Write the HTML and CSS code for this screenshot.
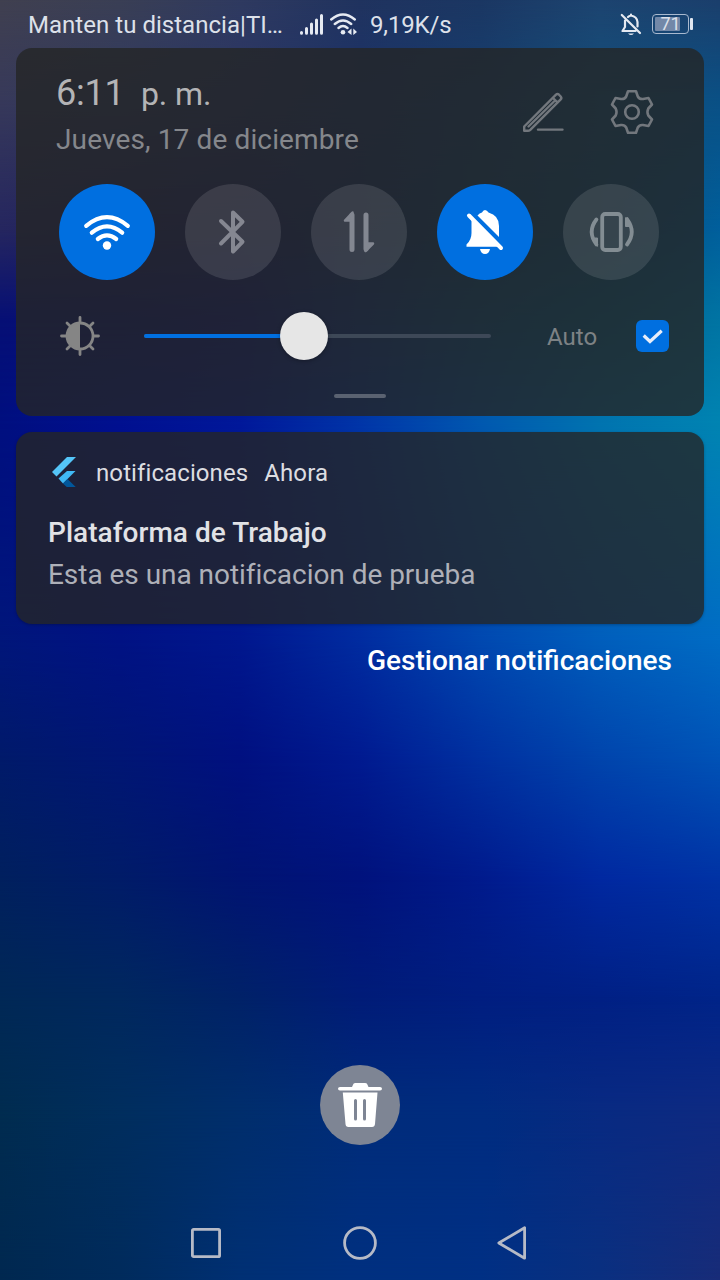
FILE: index.html
```html
<!DOCTYPE html>
<html lang="es">
<head>
<meta charset="utf-8">
<title>Panel de notificaciones</title>
<link rel="stylesheet" href="styles.css">
</head>
<body>
<div class="screen">
  <div class="wallpaper">
    <i class="band b0"></i><i class="band b1"></i><i class="band b2"></i><i class="band b3"></i><i class="band b4"></i><i class="band b5"></i><i class="band b6"></i><i class="band b7"></i><i class="band b8"></i><i class="band b9"></i><i class="band b10"></i>
  </div>

  <header class="status">
    <span class="carrier">Manten tu distancia|TI…</span>
    <svg class="signal" width="24" height="24" viewBox="0 0 24 24" stroke="#e6eaf2" stroke-width="3" stroke-linecap="round"><path d="M1.500 20.600V21.200M6.500 16.500V21.200M11.500 12V21.200M16.500 8V21.200M21.500 3.500V21.200"/></svg>
    <svg class="wifi-small" width="28" height="24" viewBox="0 0 28 24" fill="none" stroke="#e6eaf2" stroke-width="2.400" stroke-linecap="round"><path d="M1.200 7.500Q13-2.500 24.800 7.500M4.800 12Q13 4.800 21.200 12M8.500 16Q13 12 17.500 16"/><circle cx="13" cy="20.300" r="2.300" fill="#e6eaf2" stroke="none"/><path d="M21.500 16.500V23L17.500 20ZM23.300 23V16.500L27 20Z" fill="#e6eaf2" stroke="none"/></svg>
    <span class="speed">9,19K/s</span>
    <svg class="mute" width="22" height="24" viewBox="0 0 22 24" fill="none" stroke="#e6eaf2" stroke-width="2.200" stroke-linecap="round" stroke-linejoin="round"><path d="M1.800 3L20 21M5 8.500V15L2.500 19H15.500M8 5Q9 4 11 3.500Q17 4.500 17.500 10V14.500M11 2.500V3.500"/><path d="M8 21.500H14Q11 24.500 8 21.500Z" fill="#e6eaf2" stroke="none"/></svg>
    <span class="battery"><span class="battery-level"></span><span class="battery-num">71</span></span>
    <span class="battery-tip"></span>
  </header>

  <section class="panel quick">
    <div class="quick-head">
      <div>
        <div class="clock"><span class="time">6:11</span><span class="ampm">p. m.</span></div>
        <div class="date">Jueves, 17 de diciembre</div>
      </div>
      <svg class="edit" width="44" height="44" viewBox="0 0 44 44" fill="none" stroke="#72777d" stroke-width="2.400" stroke-linecap="round" stroke-linejoin="round"><path d="M2.200 40.800V36.500L34 4.700Q35.500 3.300 37 4.700L38.700 6.500Q40 8 38.700 9.300L8.500 39.700Q7 40.800 6 40.800ZM31 8L35.200 12.200M6.500 36.500L32 11.500M16 39.600H40.500"/></svg>
      <svg class="gear" width="44" height="46" viewBox="0 0 44 46" fill="none" stroke="#72777d" stroke-width="2.600" stroke-linejoin="round"><path d="M18 2.300H26L27.800 7.500Q29.500 10.400 33 10L38.500 9L42 15.500L38.300 19.500Q36.600 23 38.300 26.500L42 30.500L38.500 37L33 36Q29.500 35.600 27.800 38.500L26 43.700H18L16.200 38.500Q14.500 35.600 11 36L5.500 37L2 30.500L5.700 26.500Q7.400 23 5.700 19.500L2 15.500L5.500 9L11 10Q14.500 10.400 16.200 7.500Z"/><circle cx="22" cy="23" r="6.800"/></svg>
    </div>

    <div class="toggles">
      <span class="toggle on"><svg width="96" height="96" viewBox="0 0 96 96" fill="none" stroke="#fff" stroke-width="4.200" stroke-linecap="round"><path d="M27.200 41.800Q48 24.500 68.800 41.800M32.800 48.700Q48 36 63.200 48.700M38.800 55Q48 47.800 57.200 55"/><circle cx="48" cy="61.500" r="4.200" fill="#fff" stroke="none"/></svg></span>
      <span class="toggle"><svg width="96" height="96" viewBox="0 0 96 96" fill="none" stroke="#858791" stroke-width="4" stroke-linecap="round" stroke-linejoin="round"><path d="M36 37L57.500 57.800L48 67.500V28.500L57.500 37.800L36 59.500"/></svg></span>
      <span class="toggle"><svg width="96" height="96" viewBox="0 0 96 96" fill="none" stroke="#838791" stroke-width="5" stroke-linecap="round"><path d="M41 31V65.500M55 31V65"/><path d="M41.500 28.500L34 36.500H41ZM55 59.500H62L54.500 67Z" fill="#838791" stroke-width="2.500" stroke-linejoin="round"/></svg></span>
      <span class="toggle on"><svg width="96" height="96" viewBox="0 0 96 96" fill="#fff"><path d="M40.500 31.500Q42.500 29.300 45 28.600Q46 26 48 26T51.500 28.600Q62 31.500 62 42V53ZM34.500 34L63 62.700H29.500V60.500Q34.500 56 34.500 49Z"/><path d="M32 31.500L64 64" stroke="#fff" stroke-width="4" stroke-linecap="round"/><path d="M43 65H53Q52 70 48 70T43 65Z"/></svg></span>
      <span class="toggle"><svg width="96" height="96" viewBox="0 0 96 96" fill="none" stroke="#838d93" stroke-width="3.800" stroke-linecap="round" stroke-linejoin="round"><rect x="39.200" y="30" width="18.600" height="36" rx="3"/><path d="M33.400 35.500Q24 47.500 33.400 60.500M64 60.500Q73.500 48 64 35"/><path d="M29.500 54H34.500V62ZM62.500 34V42.500H68Z" fill="#838d93" stroke-width="1"/></svg></span>
    </div>

    <div class="brightness">
      <svg class="sun" width="40" height="40" viewBox="0 0 40 40" fill="none" stroke="#858585" stroke-width="2.800" stroke-linecap="round"><circle cx="20" cy="20" r="13"/><path d="M20 7A13 13 0 0 0 20 33Z" fill="#858585" stroke="none"/><path d="M20 1.500V6M20 34V38.500M1.500 20H6M34 20H38.500M7 7L10 10M33 7L30 10M7 33L10 30M33 33L30 30"/></svg>
      <div class="track"><span class="fill"></span><span class="thumb"></span></div>
      <span class="auto">Auto</span>
      <span class="check"><svg width="32" height="32" viewBox="0 0 32 32" fill="none" stroke="#e8eefa" stroke-width="3.200"><path d="M7.700 15.500L14 21.500L25.700 10.800"/></svg></span>
    </div>
    <div class="handle"></div>
  </section>

  <section class="panel notice">
    <div class="notice-head">
      <svg width="24" height="30" viewBox="0 0 24 30"><path d="M0 15L15 0H24L4.500 19.500Z" fill="#54c5f8"/><path d="M15 14H23.500L11 26.500L6.500 21.500Z" fill="#40b9f5"/><path d="M11 26.500L15.500 22L23.700 30H14.700Z" fill="#01579b"/></svg>
      <span class="app">notificaciones</span><span class="when">Ahora</span>
    </div>
    <div class="title">Plataforma de Trabajo</div>
    <div class="message">Esta es una notificacion de prueba</div>
  </section>

  <div class="manage">Gestionar notificaciones</div>

  <div class="clear"><svg width="80" height="80" viewBox="0 0 80 80"><path d="M20 22H32L33.500 18.800Q34 18 35.500 18H45Q46.500 18 47 18.800L48.500 22H60Q62 22 62 23.800T60 25.600H20Q18 25.600 18 23.800T20 22Z" fill="#fff"/><path d="M22.800 27.500H57.500L55 59Q54.700 62 52 62H28.500Q25.700 62 25.500 59Z" fill="#fff"/><path d="M35.500 35.500V54M44.500 35.500V54" stroke="#7e8594" stroke-width="3" stroke-linecap="round"/></svg></div>

  <nav class="nav">
    <svg width="34" height="36" viewBox="0 0 34 36"><rect x="3.400" y="4.400" width="27.200" height="27.200" rx="1.200"/></svg>
    <svg width="36" height="36" viewBox="0 0 36 36"><circle cx="18" cy="18" r="15.400"/></svg>
    <svg width="32" height="36" viewBox="0 0 32 36"><path d="M1.800 18L27.600 2.800V33.200Z"/></svg>
  </nav>
</div>
</body>
</html>
```
FILE: styles.css
```css
* { box-sizing: border-box; }
body { margin: 0; font-family: Roboto, "Noto Sans", sans-serif; }
svg { display: block; flex: none; }
.screen {
  position: relative;
  isolation: isolate;
  width: 720px;
  height: 1280px;
  overflow: hidden;
  display: flex;
  flex-direction: column;
}

/* Wallpaper: horizontal gradients, each fading in over the one above it */
.wallpaper { position: absolute; inset: 0; z-index: -1; }
.band {
  position: absolute;
  inset: 0;
  -webkit-mask-image: linear-gradient(transparent var(--from), #000 var(--to));
  mask-image: linear-gradient(transparent var(--from), #000 var(--to));
}
.b0 { --from: -1px; --to: 0px; background: linear-gradient(90deg, #404050, #3a3f55, #2f3a60, #20335f, #1b3763, #1d4470, #1b3f6c); }
.b1 { --from: 0px; --to: 100px; background: linear-gradient(90deg, #37395a, #313a60, #2a3565, #1c336a, #163f70, #12507c, #0a5085); }
.b2 { --from: 100px; --to: 230px; background: linear-gradient(90deg, #25265f, #202060, #1a2068, #15306c, #0c4470, #0a5080, #005f9c); }
.b3 { --from: 230px; --to: 320px; background: linear-gradient(90deg, #060f75, #080f78, #0c1480, #0a3488, #065088, #006490, #0074a3); }
.b4 { --from: 320px; --to: 424px; background: linear-gradient(90deg, #000f80, #001090, #00189a, #0035a8, #0058b0, #0074b0, #0084b2); }
.b5 { --from: 424px; --to: 640px; background: linear-gradient(90deg, #00167a, #001284, #00178e, #002ca0, #0048b0, #005ebc, #006cc4); }
.b6 { --from: 640px; --to: 760px; background: linear-gradient(90deg, #001a6a, #001674, #001080, #001a90, #0030a0, #0044ac, #0052b6); }
.b7 { --from: 760px; --to: 880px; background: linear-gradient(90deg, #00205e, #001c68, #001472, #00127c, #001a8c, #0028a0, #0032a4); }
.b8 { --from: 880px; --to: 1000px; background: linear-gradient(90deg, #002856, #00285e, #002268, #001c78, #001e80, #002084, #002488); }
.b9 { --from: 1000px; --to: 1110px; background: linear-gradient(90deg, #002c50, #002e5e, #002e6c, #002c7a, #002c80, #082a82, #0e2a82); }
.b10 { --from: 1110px; --to: 1280px; background: linear-gradient(90deg, #002850, #002b5c, #003074, #003080, #003084, #0a3080, #182c78); }

.status {
  height: 48px;
  padding: 0 26px 0 28px;
  display: flex;
  align-items: center;
  font-size: 24px;
  line-height: 48px;
  color: #dde1ea;
}
.carrier { width: 272px; padding-top: 2px; white-space: nowrap; letter-spacing: .03px; }
.wifi-small { margin: 0 12px 0 6px; }
.speed { width: 250px; padding-top: 2px; letter-spacing: -.15px; }
.mute { margin-right: 10px; }
.battery {
  position: relative;
  width: 37px;
  height: 20px;
  border: 1.5px solid #a9b9cf;
  border-radius: 4px;
  padding: 2px;
}
.battery-level { display: block; width: 25px; height: 14px; background: #7388a8; border-radius: 1px; }
.battery-num { position: absolute; inset: 0; font-size: 18px; line-height: 18px; text-align: center; }
.battery-tip { width: 3px; height: 12px; margin-left: 1px; border-radius: 1px; background: #e0e6f0; }

.panel {
  margin: 0 16px;
  flex: none;
  border-radius: 16px;
  background: rgba(36, 38, 38, .8);
}
.quick { height: 368px; padding: 22px 35px 0 40px; }
.quick-head { height: 114px; display: flex; }
.quick-head > div { width: 466px; }
.clock { height: 47px; line-height: 47px; color: #b4b4b6; display: flex; align-items: baseline; }
.time { width: 85px; font-size: 36px; letter-spacing: -.2px; }
.ampm { font-size: 32px; letter-spacing: -.1px; }
.date { font-size: 28px; line-height: 46px; color: #85878c; letter-spacing: .13px; }
.edit { margin-top: 20px; }
.gear { margin: 19px 0 0 44px; }
.toggles { display: flex; justify-content: space-between; margin: 0 10px 0 3px; }
.toggle { width: 96px; height: 96px; border-radius: 50%; background: rgba(255, 255, 255, .11); }
.toggle.on { background: #006fe0; }
.brightness { height: 112px; display: flex; align-items: center; padding-left: 4px; }
.track {
  position: relative;
  width: 347px;
  height: 4px;
  margin-left: 44px;
  border-radius: 2px;
  background: #3d4857;
}
.fill { display: block; width: 160px; height: 4px; border-radius: 2px; background: #006fe0; }
.thumb {
  position: absolute;
  left: 136px;
  top: -22px;
  width: 48px;
  height: 48px;
  border-radius: 50%;
  background: #e6e6e6;
  box-shadow: 0 1px 4px rgba(0, 0, 0, .3);
}
.auto { width: 89px; margin-left: 56px; padding-top: 2px; font-size: 24px; color: #7d8285; }
.check { width: 33px; height: 32px; border-radius: 6px; background: #006fe0; }
.handle { width: 52px; height: 4px; margin: 2px 0 0 278px; border-radius: 2px; background: #5a6271; }

.notice { height: 192px; margin-top: 16px; padding: 20px 32px 0; box-shadow: 0 1px 3px rgba(0, 0, 0, .25); }
.notice-head { height: 40px; padding-left: 4px; display: flex; align-items: center; font-size: 24px; color: #dcdde1; }
.app, .when { padding-top: 2px; letter-spacing: .1px; }
.app { margin: 0 16px 0 20px; }
.title { margin-top: 20px; font-size: 28px; line-height: 42px; font-weight: 500; color: #e1e2e6; letter-spacing: .03px; }
.message { font-size: 28px; line-height: 42px; color: #aeb0b8; letter-spacing: -.04px; }
.manage { flex: none; margin: 16px 48px 0 0; text-align: right; font-size: 28px; line-height: 42px; font-weight: 500; color: #fff; }
.clear { flex: none; width: 80px; height: 80px; margin: 383px auto 0; border-radius: 50%; background: #7e8594; }
.nav { display: flex; margin: 80px 0 0 189px; }
.nav svg { fill: none; stroke: #b6bac6; stroke-width: 2.8; stroke-linejoin: round; }
.nav svg + svg { margin-left: 119px; }
```
